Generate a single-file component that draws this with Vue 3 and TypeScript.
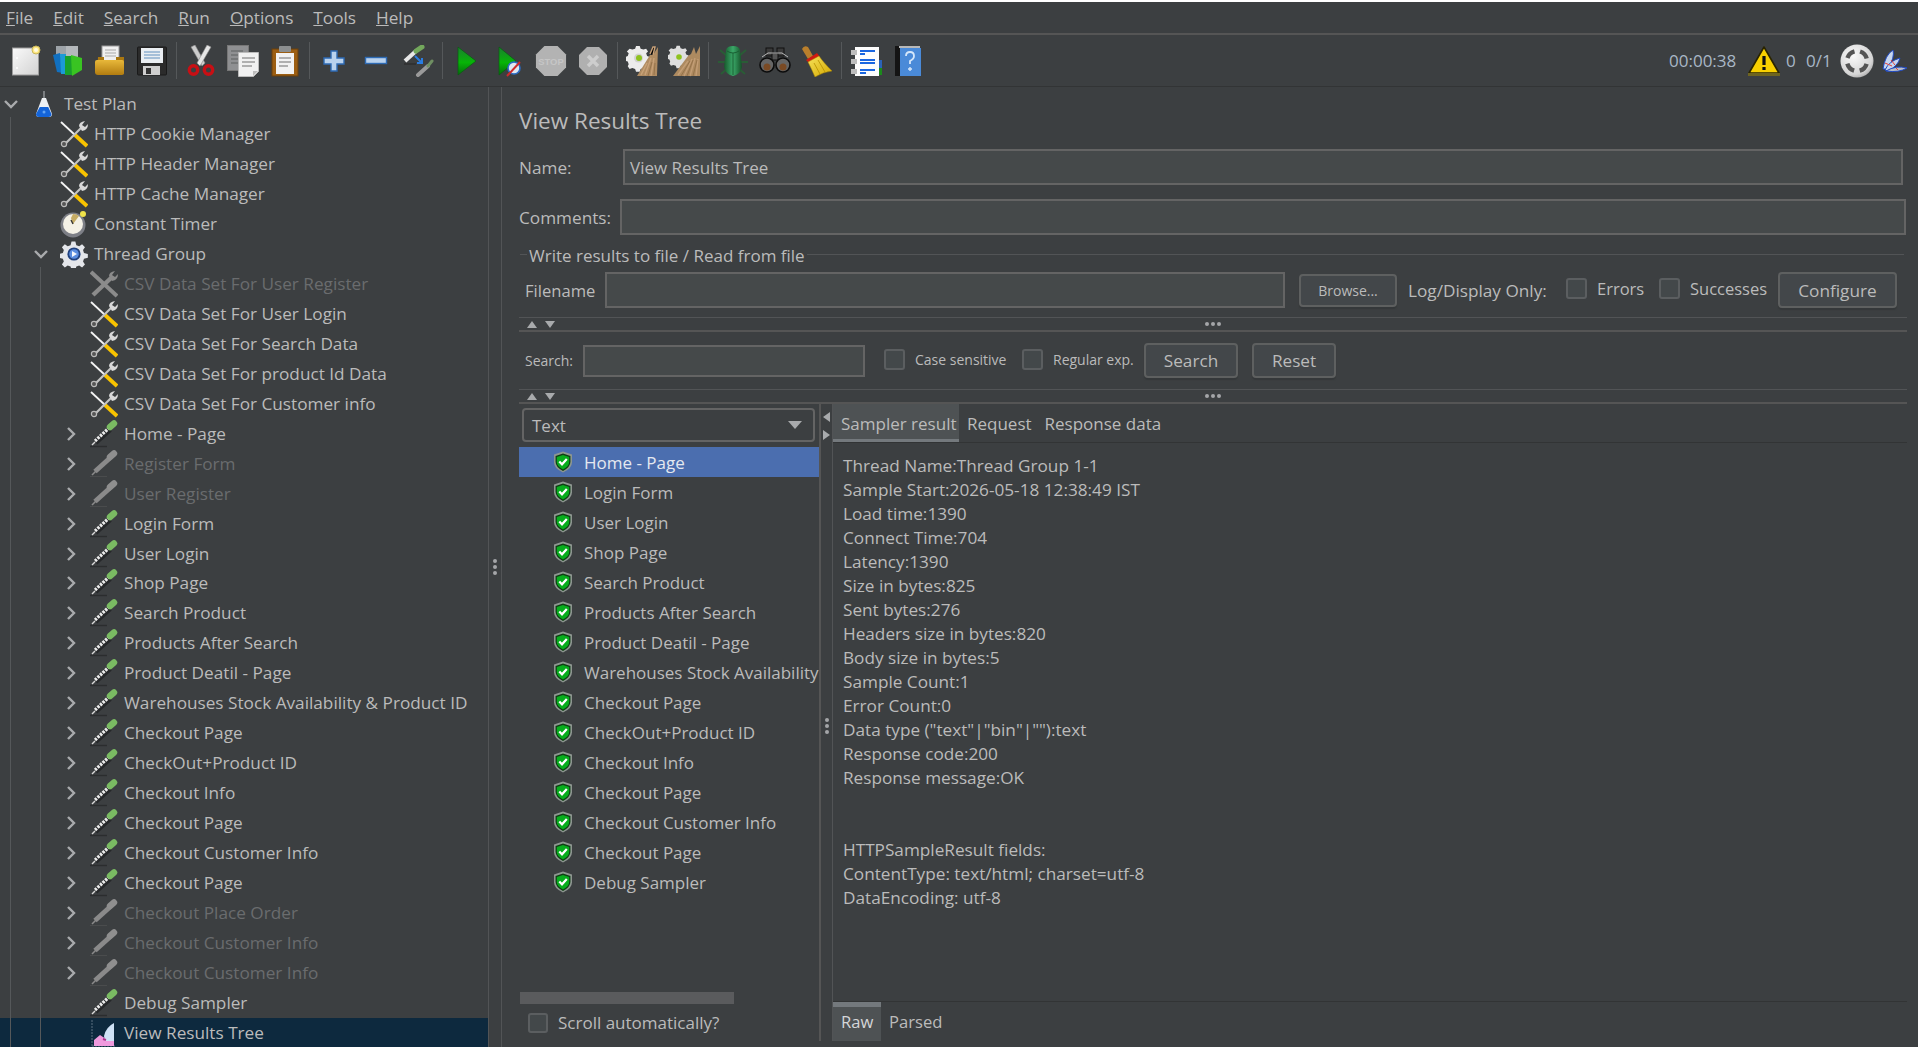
<template>
  <div class="app">
    <svg class="sprite" aria-hidden="true">
      <defs>
        <linearGradient id="pageFill" x1="0" y1="0" x2="1" y2="1"><stop offset="0" stop-color="#fafafa" /><stop offset="1" stop-color="#d2d2d2" /></linearGradient>
        <linearGradient id="folderFill" x1="0" y1="0" x2="0" y2="1"><stop offset="0" stop-color="#e8b83a" /><stop offset="1" stop-color="#b27c10" /></linearGradient>
        <linearGradient id="playFill" x1="0" y1="0" x2="0" y2="1"><stop offset="0" stop-color="#1b7f30" /><stop offset=".55" stop-color="#07b507" /><stop offset="1" stop-color="#056b0c" /></linearGradient>
        <linearGradient id="bugFill" x1="0" y1="0" x2="1" y2="0"><stop offset="0" stop-color="#17592c" /><stop offset=".5" stop-color="#3aa868" /><stop offset="1" stop-color="#155027" /></linearGradient>
        <linearGradient id="broomFill" x1="0" y1="0" x2="1" y2="1"><stop offset="0" stop-color="#f7e25a" /><stop offset="1" stop-color="#d4a800" /></linearGradient>
        <radialGradient id="greyDisc" cx=".4" cy=".35" r=".8"><stop offset="0" stop-color="#fafafa" /><stop offset=".7" stop-color="#d5d5d5" /><stop offset="1" stop-color="#8e8e8e" /></radialGradient>
      </defs>

      <symbol id="t-new" viewBox="0 0 32 32">
        <rect x="2.5" y="3" width="26" height="27" fill="url(#pageFill)" stroke="#9c9c9c" />
        <circle cx="7" cy="13" r="1" fill="#fff" /><circle cx="7" cy="23" r="1" fill="#fff" />
        <circle cx="26" cy="5" r="4" fill="#ffe882" stroke="#c9b65a" />
        <circle cx="26" cy="5" r="2" fill="#fffbe0" />
      </symbol>
      <symbol id="t-templates" viewBox="0 0 32 32">
        <rect x="4" y="1" width="10" height="11" fill="#9da3a8" /><rect x="14" y="1" width="12" height="11" fill="#b4b8bb" />
        <path d="M1 10l7-2 3 20-6-1z" fill="#1170c0" /><path d="M8 9h6v20H9z" fill="#1c9ad6" />
        <path d="M13 11h8v19h-8z" fill="#18a02c" /><path d="M19 10l11 3v12l-10 6z" fill="#39c422" />
      </symbol>
      <symbol id="t-open" viewBox="0 0 32 32">
        <rect x="8" y="1" width="17" height="15" fill="#f0f0f0" stroke="#9b9b9b" />
        <path d="M11 5h11M11 8h11M11 11h11" stroke="#a8a8a8" />
        <path d="M4 12h6v3h12v-3h8v17H3z" fill="#a97710" />
        <path d="M1 17q0-2 2-2h25q2 0 2 2v11q0 2-2 2H4q-3 0-3-3z" fill="url(#folderFill)" />
      </symbol>
      <symbol id="t-save" viewBox="0 0 32 32">
        <rect x="1.5" y="2" width="29" height="28" rx="1" fill="#2b2b2b" stroke="#1a1a1a" />
        <rect x="5" y="3" width="22" height="15" fill="#eaeef2" />
        <path d="M8 7h16M8 10h16M8 13h16" stroke="#8fb0cf" stroke-width="1.6" />
        <rect x="7" y="21" width="17" height="9" fill="#cfcfcf" />
        <rect x="10" y="23" width="5" height="6" fill="#333" />
      </symbol>
      <symbol id="t-cut" viewBox="0 0 32 32">
        <path d="M6 2l11 19 3-3L10 0z" fill="#cdcdcd" stroke="#8a8a8a" stroke-width=".6" />
        <path d="M26 2L15 21l-3-3L22 0z" fill="#e6e6e6" stroke="#8a8a8a" stroke-width=".6" />
        <circle cx="8.5" cy="25" r="4.2" fill="none" stroke="#c80f14" stroke-width="3.4" />
        <circle cx="23.5" cy="25" r="4.2" fill="none" stroke="#c80f14" stroke-width="3.4" />
      </symbol>
      <symbol id="t-copy" viewBox="0 0 32 32">
        <rect x="0.5" y="0.5" width="21" height="25" fill="#8f9092" stroke="#777" />
        <path d="M4 6h12M4 10h12M4 14h12M4 18h12" stroke="#6f7072" stroke-width="1.4" />
        <path d="M11.5 7.5h20v19l-5 5h-15z" fill="#f1f1f1" stroke="#bbb" />
        <path d="M15 13h13M15 17h13M15 21h10" stroke="#9a9a9a" stroke-width="1.4" />
        <path d="M26 31v-5h5z" fill="#bdbdbd" />
      </symbol>
      <symbol id="t-paste" viewBox="0 0 32 32">
        <rect x="3" y="4" width="26" height="27" fill="#9c5e12" stroke="#6b400c" />
        <rect x="7" y="8" width="18" height="21" fill="#f2f2f2" />
        <path d="M10 13h12M10 17h12M10 21h9" stroke="#9a9a9a" stroke-width="1.4" />
        <rect x="10" y="1" width="12" height="6" rx="1" fill="#8c8f90" />
      </symbol>
      <symbol id="t-add" viewBox="0 0 32 32">
        <path d="M13 6h6v7h7v6h-7v7h-6v-7H6v-6h7z" fill="#b9d2ee" stroke="#2e6bb5" stroke-width="1.4" />
      </symbol>
      <symbol id="t-remove" viewBox="0 0 32 32">
        <rect x="5.5" y="12.5" width="21" height="6" fill="#b9d2ee" stroke="#2e6bb5" stroke-width="1.4" />
      </symbol>
      <symbol id="t-toggle" viewBox="0 0 32 32">
        <path d="M3 16L14 6" stroke="#e8e8e8" stroke-width="4" />
        <path d="M14 6l6-4" stroke="#73a85c" stroke-width="5" stroke-linecap="round" />
        <path d="M2 19h12" stroke="#2b2b2b" stroke-width="1.2" />
        <path d="M13 11l7 7m0-5v5h-5" fill="none" stroke="#2a7de1" stroke-width="2" />
        <path d="M16 30l10-9" stroke="#9a9a9a" stroke-width="4" stroke-linecap="round" />
        <path d="M26 21l4-5" stroke="#6f8f62" stroke-width="3" stroke-linecap="round" />
      </symbol>
      <symbol id="t-start" viewBox="0 0 32 32">
        <path d="M7 2l18 14L7 30z" fill="url(#playFill)" stroke="#0a5a12" stroke-width=".7" />
      </symbol>
      <symbol id="t-startn" viewBox="0 0 32 32">
        <path d="M6 2l17 14L6 30z" fill="url(#playFill)" stroke="#0a5a12" stroke-width=".7" />
        <circle cx="21" cy="23" r="6" fill="#dfe7f2" stroke="#2c6cc5" stroke-width="1.6" />
        <path d="M14 31L27 17" stroke="#cf2a2a" stroke-width="2" />
      </symbol>
      <symbol id="t-stop" viewBox="0 0 34 34">
        <path d="M10 1h14l9 9v14l-9 9H10l-9-9V10z" fill="#b3b3b3" />
        <text x="17" y="21" font-family="Liberation Sans, sans-serif" font-weight="700" font-size="10" text-anchor="middle" fill="#c6c6c6">STOP</text>
      </symbol>
      <symbol id="t-shut" viewBox="0 0 32 32">
        <path d="M10 2h12l8 8v12l-8 8H10l-8-8V10z" fill="#b0b0b0" />
        <path d="M11 11l10 10M21 11L11 21" stroke="#cdcdcd" stroke-width="3.4" />
      </symbol>
      <symbol id="t-clear" viewBox="0 0 32 32">
        <path d="M12 1h4l1 3 3 1 3-1 2 3-2 2 1 3 3 1v4l-3 1-1 3 2 2-3 3-2-1-3 1-1 3h-4l-1-3-3-1-3 1-2-3 1-2-1-3-3-1v-4l3-1 1-3-2-2 3-3 3 1 3-1z" fill="#ececec" transform="translate(-1 0) scale(.92)" />
        <circle cx="12.5" cy="13" r="4.5" fill="#d2d2d2" />
        <circle cx="13" cy="13" r="3" fill="#8ec21e" />
        <path d="M11 31L24 10l3 0 5-8-1 29z" fill="#b08c62" />
        <path d="M24 9l3-7 2 0-2 8M19 30l6-17M25 31l3-18M15 30l6-12" stroke="#c8a178" stroke-width="1.4" />
        <path d="M22 31l4-14M28 30l1-12" stroke="#8f6c45" stroke-width=".8" />
      </symbol>
      <symbol id="t-clearall" viewBox="0 0 32 32">
        <path d="M12 1h4l1 3 3 1 3-1 2 3-2 2 1 3 3 1v4l-3 1-1 3 2 2-3 3-2-1-3 1-1 3h-4l-1-3-3-1-3 1-2-3 1-2-1-3-3-1v-4l3-1 1-3-2-2 3-3 3 1 3-1z" fill="#dedede" transform="translate(-1 0) scale(.8)" />
        <circle cx="11" cy="12" r="2.8" fill="#8ec21e" />
        <path d="M5 31L20 11l3-2 3-7 2 7 4-8v30z" fill="#ad8a60" />
        <path d="M10 30l10-14M16 31l8-17M22 31l5-18M28 31l2-17" stroke="#c39d75" stroke-width="1.4" />
        <path d="M13 31l9-15M19 31l6-16M25 31l4-16" stroke="#8f6c45" stroke-width=".8" />
      </symbol>
      <symbol id="t-function" viewBox="0 0 32 32">
        <path d="M3 5l7 6M29 5l-7 6M1 17h9M31 17h-9M4 29l7-6M28 29l-7-6" stroke="#2a5c36" stroke-width="2" />
        <path d="M16 1q6 0 7 4l2 17q-2 8-9 9-7-1-9-9L9 5q1-4 7-4z" fill="url(#bugFill)" />
        <path d="M16 8v22M10 6q6 4 12 0" fill="none" stroke="#1a5f33" stroke-width="1" />
      </symbol>
      <symbol id="t-search" viewBox="0 0 32 32">
        <rect x="7" y="3" width="7" height="8" fill="#3a3a3a" stroke="#111" /><rect x="18" y="3" width="7" height="8" fill="#3a3a3a" stroke="#111" />
        <rect x="13" y="8" width="6" height="7" fill="#555" stroke="#111" />
        <circle cx="8" cy="20" r="7" fill="#666" stroke="#0c0c0c" stroke-width="1.6" />
        <circle cx="24" cy="20" r="7" fill="#666" stroke="#0c0c0c" stroke-width="1.6" />
        <circle cx="8" cy="22" r="3.5" fill="#7a4a24" /><circle cx="24" cy="22" r="3.5" fill="#7a4a24" />
        <path d="M3 12l6-4h14l6 4" fill="none" stroke="#b9b9b9" stroke-width="1" />
      </symbol>
      <symbol id="t-broom" viewBox="0 0 32 32">
        <path d="M1 4q2-4 6-2l5 9-5 3z" fill="#b97f2c" />
        <path d="M5 15l11-7 3 4-11 6z" fill="#cf1a12" />
        <path d="M7 17l11-6q4 6 13 15-9 1-17 6-3-7-7-15z" fill="url(#broomFill)" stroke="#a98600" stroke-width=".5" />
        <path d="M13 18l6 11M17 15l7 12" stroke="#b58e00" stroke-width=".8" />
      </symbol>
      <symbol id="t-log" viewBox="0 0 32 32">
        <rect x="26" y="15" width="6" height="8" fill="#2b63b8" /><rect x="26" y="23" width="6" height="7" fill="#1c8a1c" />
        <rect x="5" y="2" width="24" height="29" fill="#fdfdfd" />
        <rect x="1" y="5" width="6" height="5" fill="#bdbdbd" /><rect x="1" y="14" width="6" height="5" fill="#bdbdbd" /><rect x="1" y="24" width="6" height="5" fill="#bdbdbd" />
        <path d="M10 6h15M10 9h5M10 15h15M10 18h15M10 25h15M10 28h6" stroke="#1a66e0" stroke-width="1.8" />
      </symbol>
      <symbol id="t-help" viewBox="0 0 28 32">
        <rect x="1" y="1" width="6" height="30" fill="#141414" />
        <rect x="5" y="1" width="21" height="2" fill="#b8b8b8" />
        <rect x="6" y="3" width="21" height="28" fill="#4a8ad8" />
        <path d="M12 11q0-4 4-4t4 4q0 3-4 5v3" fill="none" stroke="#d4e6fa" stroke-width="1.8" />
        <path d="M16 22v4M14 24h4" stroke="#d4e6fa" stroke-width="1.4" />
      </symbol>

      <symbol id="s-warn" viewBox="0 0 34 32">
        <path d="M17 2L32 28H2z" fill="#f8d000" stroke="#2a2400" stroke-width="1.6" stroke-linejoin="round" />
        <rect x="1" y="28" width="32" height="3" fill="#6e6420" />
        <rect x="15.4" y="11" width="3.2" height="9" fill="#111" /><rect x="15.4" y="22" width="3.2" height="3" fill="#111" />
      </symbol>
      <symbol id="s-disc" viewBox="0 0 34 34">
        <circle cx="17" cy="17" r="16.5" fill="url(#greyDisc)" />
        <circle cx="17" cy="17" r="10" fill="none" stroke="#555" stroke-width="4.4" stroke-dasharray="10 5.7" stroke-dashoffset="-2.85" />
      </symbol>
      <symbol id="s-feather" viewBox="0 0 26 24">
        <path d="M1 20Q3 6 11 1q2 7-5 19z" fill="#c7d6ef" stroke="#1f49c2" />
        <path d="M3 21Q7 12 18 9q-2 8-12 13z" fill="#c7d6ef" stroke="#1f49c2" />
        <path d="M4 22q10-6 21-3-8 5-21 3z" fill="#b7bdc9" stroke="#1f49c2" />
        <path d="M3 14l7 3M9 11l4 5M14 19l2 2" stroke="#e0433d" />
      </symbol>

      <symbol id="n-flask" viewBox="0 0 18 28">
        <path d="M9 1v8" stroke="#8b8f92" stroke-width="1.6" />
        <path d="M7 8h4l6 16q0 3-3 3H4q-3 0-3-3z" fill="#eef1f4" />
        <path d="M4.8 17h8.4l3.3 7q0 3-3 3H4q-3 0-3-3z" fill="#1464d8" />
        <circle cx="9" cy="22" r="1.5" fill="#62a4f2" />
      </symbol>
      <symbol id="n-wrench" viewBox="0 0 28 28">
        <path d="M1 2l14 13" stroke="#f4f4f4" stroke-width="1.8" />
        <path d="M15 15l12 11" stroke="#f8c300" stroke-width="3.8" />
        <path d="M21 8L5 24" stroke="#c4c4c4" stroke-width="2.2" />
        <circle cx="4" cy="24" r="2.6" fill="#555" stroke="#bbb" stroke-width="1.2" />
        <path d="M19 6q0-4 6-5l-3 4 3 2 3-3q0 6-6 7z" fill="#d9d9d9" />
      </symbol>
      <symbol id="n-wrench-off" viewBox="0 0 28 28">
        <path d="M1 2l26 24" stroke="#8b8b8b" stroke-width="4" />
        <path d="M21 8L3 25" stroke="#8b8b8b" stroke-width="4.4" />
        <path d="M19 6q0-4 6-5l-3 4 3 2 3-3q0 6-6 7z" fill="#8b8b8b" />
      </symbol>
      <symbol id="n-timer" viewBox="0 0 28 28">
        <circle cx="13" cy="15" r="12.5" fill="#7d7f86" />
        <circle cx="13" cy="14" r="10" fill="#f4f1e6" />
        <path d="M13 4a10 10 0 0 1 6 2l-6 8-2-6z" fill="#c5ab63" />
        <path d="M13 14l-2-4" stroke="#333" stroke-width="1.4" />
        <circle cx="23" cy="4" r="3" fill="#efe24a" />
      </symbol>
      <symbol id="n-gear" viewBox="0 0 28 28">
        <path d="M12 1h4l1 4 3 1 3-2 3 3-2 3 1 3 4 1v4l-4 1-1 3 2 3-3 3-3-2-3 1-1 4h-4l-1-4-3-1-3 2-3-3 2-3-1-3-4-1v-4l4-1 1-3-2-3 3-3 3 2 3-1z" fill="#e4e6ea" transform="translate(0 .5) scale(.96)" />
        <circle cx="14" cy="14" r="6.6" fill="#20417e" />
        <circle cx="14" cy="14" r="4.8" fill="#5a8de0" />
        <path d="M12 11l5 3-5 3z" fill="#f4f7fd" />
      </symbol>
      <symbol id="n-dropper" viewBox="0 0 28 28">
        <path d="M0 26.5h17" stroke="#2b2d2e" stroke-width="1.4" />
        <path d="M2 25l4-4" stroke="#d8d8d8" stroke-width="1.4" />
        <path d="M5.500 22.500L20 9.500" stroke="#26282a" stroke-width="5.200" />
        <path d="M5 21L19 8" stroke="#ececec" stroke-width="3.200" stroke-dasharray="2.500 1" />
        <path d="M20 7l4-3.500" stroke="#7abb62" stroke-width="6.400" stroke-linecap="round" />
      </symbol>
      <symbol id="n-dropper-off" viewBox="0 0 28 28">
        <path d="M0 26.5h17" stroke="#4a4c4d" stroke-width="1" />
        <path d="M2 25l4-4" stroke="#8a8a8a" stroke-width="1.6" />
        <path d="M5 21.5L20 8" stroke="#8a8a8a" stroke-width="5" />
        <path d="M20 7l4-3.5" stroke="#8f8f8f" stroke-width="6.4" stroke-linecap="round" />
      </symbol>
      <symbol id="n-results" viewBox="0 0 28 28">
        <path d="M2 1v26M2 27h24" stroke="#5c7080" stroke-width="1" stroke-dasharray="2 1" />
        <path d="M4 27v-6l6-5 6 4 8 0v7z" fill="#f09ade" />
        <path d="M14 17q2-9 10-13v18h-9z" fill="#cfe2f6" />
        <path d="M13 20l3 1" stroke="#b03090" stroke-width="2" />
      </symbol>
      <symbol id="n-ok" viewBox="0 0 20 22">
        <path d="M10 .5l9 3v8q0 6-9 10-9-4-9-10v-8z" fill="#8d9690" />
        <path d="M10 2.5l7.4 2.5V11q0 5-7.4 9-7.4-4-7.4-9V5z" fill="#0f3d14" />
        <path d="M10 4l6.2 2V11q0 4-6.2 7.6Q3.8 15 3.8 11V6z" fill="#07ad1d" />
        <path d="M6.3 10.5l2.7 2.8 4.8-5.3" fill="none" stroke="#fff" stroke-width="2.2" />
      </symbol>
    </svg>

    <div class="menubar">
      <span v-for="m in menus" :key="m.rest" class="menu"><u>{{ m.key }}</u>{{ m.rest }}</span>
    </div>

    <div class="toolbar">
      <template v-for="(t, i) in tools" :key="i">
        <span v-if="t === '|'" class="tsep"><i></i></span>
        <span v-else class="tbtn"><svg class="ticon"><use :href="'#t-' + t" /></svg></span>
      </template>
      <div class="status">
        <span class="clock">00:00:38</span>
        <svg class="s-warn"><use href="#s-warn" /></svg>
        <span class="count">0</span>
        <span class="threads">0/1</span>
        <svg class="s-disc"><use href="#s-disc" /></svg>
        <svg class="s-feather"><use href="#s-feather" /></svg>
      </div>
    </div>

    <div class="body">
      <div class="tree">
        <i class="guide g0"></i>
        <i class="guide g1"></i>
        <div
          v-for="(n, i) in nodes"
          :key="i"
          class="node"
          :class="{ off: n.off, cur: n.cur }"
          :style="{ paddingLeft: n.d * 30 + 'px' }"
        >
          <span class="chev">
            <svg v-if="n.x" viewBox="0 0 14 14" class="chev-i" :class="n.x"><path d="M4 1l6 6-6 6" fill="none" stroke="#a9abad" stroke-width="2.4" /></svg>
          </span>
          <svg class="nicon"><use :href="'#n-' + n.i" /></svg>
          <span class="ntext">{{ n.t }}</span>
        </div>
      </div>

      <div class="vsplit"><span class="dots col"><b></b><b></b><b></b></span></div>

      <div class="panel">
        <div class="title">View Results Tree</div>
        <div class="frow name-row">
          <label class="name-lbl">Name:</label>
          <div class="field name-f">View Results Tree</div>
        </div>
        <div class="frow comm-row">
          <label class="comm-lbl">Comments:</label>
          <div class="field comm-f"></div>
        </div>
        <div class="legend">
          <i class="lg-a"></i><span>Write results to file / Read from file</span><i class="lg-b"></i>
        </div>
        <div class="frow file-row">
          <label class="file-lbl">Filename</label>
          <div class="field file-f"></div>
          <button class="btn browse">Browse...</button>
          <span class="log-lbl">Log/Display Only:</span>
          <i class="check"></i><span class="opt err">Errors</span>
          <i class="check"></i><span class="opt suc">Successes</span>
          <button class="btn conf">Configure</button>
        </div>
        <div class="hsplit">
          <i class="tri up"></i><i class="tri dn"></i>
          <span class="dots"><b></b><b></b><b></b></span>
        </div>
        <div class="frow search-row">
          <label class="srch-lbl">Search:</label>
          <div class="field srch-f"></div>
          <i class="check c1"></i><span class="small cs">Case sensitive</span>
          <i class="check"></i><span class="small re">Regular exp.</span>
          <button class="btn srch">Search</button>
          <button class="btn rst">Reset</button>
        </div>
        <div class="hsplit two">
          <i class="tri up"></i><i class="tri dn"></i>
          <span class="dots"><b></b><b></b><b></b></span>
        </div>

        <div class="results">
          <div class="rleft">
            <div class="combo"><span>Text</span><i class="tri dn big"></i></div>
            <div class="rlist">
              <div v-for="(r, i) in results" :key="i" class="ritem" :class="{ sel: i === 0 }">
                <svg class="shield"><use href="#n-ok" /></svg>
                <span>{{ r }}</span>
              </div>
            </div>
            <div class="hbar"></div>
            <div class="scrollchk"><i class="check big"></i><span>Scroll automatically?</span></div>
          </div>
          <div class="rsplit">
            <i class="tri lt"></i><i class="tri rt"></i>
            <span class="dots col"><b></b><b></b><b></b></span>
          </div>
          <div class="rright">
            <div class="tabs">
              <span class="tab on">Sampler result</span>
              <span class="tab">Request</span>
              <span class="tab">Response data</span>
            </div>
            <div class="detail">
              <div v-for="(l, i) in lines" :key="i" class="dline">{{ l }}</div>
            </div>
            <div class="btabs">
              <span class="btab on">Raw</span>
              <span class="btab">Parsed</span>
            </div>
          </div>
        </div>
      </div>
    </div>
  </div>
</template>

<script setup lang="ts">
type Node = { t: string; d: number; i: string; x?: string; off?: boolean; cur?: boolean }

const menus = [
  { key: 'F', rest: 'ile' },
  { key: 'E', rest: 'dit' },
  { key: 'S', rest: 'earch' },
  { key: 'R', rest: 'un' },
  { key: 'O', rest: 'ptions' },
  { key: 'T', rest: 'ools' },
  { key: 'H', rest: 'elp' },
]

const tools = [
  'new', 'templates', 'open', 'save', '|',
  'cut', 'copy', 'paste', '|',
  'add', 'remove', 'toggle', '|',
  'start', 'startn', 'stop', 'shut', '|',
  'clear', 'clearall', '|',
  'function', 'search', 'broom', '|',
  'log', 'help',
]

function sampler(t: string, off = false): Node {
  return { t, d: 2, i: off ? 'dropper-off' : 'dropper', x: 'closed', off }
}

const nodes: Node[] = [
  { t: 'Test Plan', d: 0, i: 'flask', x: 'open' },
  { t: 'HTTP Cookie Manager', d: 1, i: 'wrench' },
  { t: 'HTTP Header Manager', d: 1, i: 'wrench' },
  { t: 'HTTP Cache Manager', d: 1, i: 'wrench' },
  { t: 'Constant Timer', d: 1, i: 'timer' },
  { t: 'Thread Group', d: 1, i: 'gear', x: 'open' },
  { t: 'CSV Data Set For User Register', d: 2, i: 'wrench-off', off: true },
  { t: 'CSV Data Set For User Login', d: 2, i: 'wrench' },
  { t: 'CSV Data Set For Search Data', d: 2, i: 'wrench' },
  { t: 'CSV Data Set For product Id Data', d: 2, i: 'wrench' },
  { t: 'CSV Data Set For Customer info', d: 2, i: 'wrench' },
  sampler('Home - Page'),
  sampler('Register Form', true),
  sampler('User Register', true),
  sampler('Login Form'),
  sampler('User Login'),
  sampler('Shop Page'),
  sampler('Search Product'),
  sampler('Products After Search'),
  sampler('Product Deatil - Page'),
  sampler('Warehouses Stock Availability & Product ID'),
  sampler('Checkout Page'),
  sampler('CheckOut+Product ID'),
  sampler('Checkout Info'),
  sampler('Checkout Page'),
  sampler('Checkout Customer Info'),
  sampler('Checkout Page'),
  sampler('Checkout Place Order', true),
  sampler('Checkout Customer Info', true),
  sampler('Checkout Customer Info', true),
  { t: 'Debug Sampler', d: 2, i: 'dropper' },
  { t: 'View Results Tree', d: 2, i: 'results', cur: true },
]

const results = [
  'Home - Page', 'Login Form', 'User Login', 'Shop Page', 'Search Product',
  'Products After Search', 'Product Deatil - Page', 'Warehouses Stock Availability & Product ID',
  'Checkout Page', 'CheckOut+Product ID', 'Checkout Info', 'Checkout Page',
  'Checkout Customer Info', 'Checkout Page', 'Debug Sampler',
]

const lines = [
  'Thread Name:Thread Group 1-1',
  'Sample Start:2026-05-18 12:38:49 IST',
  'Load time:1390',
  'Connect Time:704',
  'Latency:1390',
  'Size in bytes:825',
  'Sent bytes:276',
  'Headers size in bytes:820',
  'Body size in bytes:5',
  'Sample Count:1',
  'Error Count:0',
  'Data type ("text"|"bin"|""):text',
  'Response code:200',
  'Response message:OK',
  '\u00a0',
  '\u00a0',
  'HTTPSampleResult fields:',
  'ContentType: text/html; charset=utf-8',
  'DataEncoding: utf-8',
]
</script>

<style>
html, body { margin: 0; background: #3c3f41; }
</style>

<style scoped>
.app {
  width: 1918px; height: 1047px; overflow: hidden; box-sizing: border-box;
  border-top: 2px solid #ffffff; background: #3c3f41; color: #bbbbbb;
  display: flex; flex-direction: column;
  font-family: "Open Sans", "Liberation Sans", sans-serif; font-size: 17.2px;
}
.sprite { position: absolute; width: 0; height: 0; }

.menubar { height: 31px; display: flex; align-items: center; padding-left: 6px; gap: 20px; border-bottom: 2px solid #555555; flex: none; }

.toolbar { height: 51px; flex: none; display: flex; align-items: center; padding-left: 5px; border-bottom: 1px solid #323435; }
.tbtn { width: 42px; display: flex; justify-content: center; }
.ticon { width: 32px; height: 32px; display: block; }
.tsep { width: 7px; display: flex; justify-content: center; }
.tsep i { width: 1px; height: 37px; background: #55585a; }
.status { margin-left: auto; display: flex; align-items: center; padding-right: 10px; font-size: 17px; color: #a9b7c6; }
.clock { width: 78px; white-space: nowrap; }
.s-warn { width: 34px; height: 32px; margin-right: 5px; }
.count { width: 20px; }
.threads { width: 34px; }
.s-disc { width: 34px; height: 34px; margin-right: 8px; }
.s-feather { width: 26px; height: 24px; }

.body { flex: 1; display: flex; min-height: 0; }
.tree { width: 488px; flex: none; padding-top: 2px; position: relative; overflow: hidden; }
.guide { position: absolute; width: 1px; background: #55585a; bottom: 0; z-index: 1; }
.g0 { left: 10px; top: 30px; }
.g1 { left: 40px; top: 180px; }
.node { height: 29.97px; display: flex; align-items: center; }
.node.off { color: #6a6c6e; }
.node.cur { background: #0d293e; }
.chev { width: 22px; margin-right: 8px; display: flex; justify-content: center; flex: none; }
.chev-i { width: 14px; height: 14px; }
.chev-i.open { transform: rotate(90deg); }
.nicon { width: 28px; height: 28px; margin-right: 6px; flex: none; }
.ntext { white-space: nowrap; margin-top: -1px; }

.vsplit { width: 14px; flex: none; box-sizing: border-box; border-left: 1px solid #525456; border-right: 1px solid #525456; display: flex; align-items: center; justify-content: center; }
.dots { display: inline-flex; gap: 2px; }
.dots.col { flex-direction: column; }
.dots b { width: 4px; height: 4px; border-radius: 50%; background: #a4a6a8; display: block; }

.panel { flex: 1; min-width: 0; padding-left: 17px; padding-right: 11px; display: flex; flex-direction: column; }
.title { margin-top: 19px; height: 30px; line-height: 30px; font-size: 22.5px; }
.frow { display: flex; align-items: center; flex: none; }
.field { height: 100%; box-sizing: border-box; background: #45494a; border: 2px solid #646464; display: flex; align-items: center; padding-left: 5px; }
.name-row { height: 36px; margin-top: 13px; padding-right: 4px; }
.name-lbl { width: 104px; margin-top: 1px; }
.name-f { flex: 1; padding-top: 1px; font-size: 17px; }
.comm-row { height: 36px; margin-top: 14px; padding-right: 1px; }
.comm-lbl { width: 101px; }
.comm-f { flex: 1; }
.legend { height: 20px; margin-top: 11px; display: flex; align-items: center; gap: 1px; margin-right: 3px; }
.legend span { padding: 0 1px; margin-top: -2px; font-size: 17px; }
.lg-a, .lg-b { height: 1px; background: #525456; margin-top: -4px; }
.lg-a { width: 7px; margin-left: 1px; }
.lg-b { flex: 1; }

.file-row { height: 36px; margin-top: 6px; padding-left: 6px; }
.file-lbl { width: 80px; font-size: 16.6px; }
.file-f { width: 680px; }
.btn {
  font: inherit; color: #bbbbbb; box-sizing: border-box; border: 2px solid #5e6060; border-radius: 4px;
  background: #43474a; box-shadow: 0 2px 1px #35383a; padding: 0; height: 33px; flex: none;
}
.browse { width: 98px; margin-left: 14px; font-size: 14px; }
.log-lbl { width: 158px; margin-left: 11px; white-space: nowrap; }
.check { width: 21px; height: 21px; box-sizing: border-box; border: 2px solid #5b5e60; border-radius: 3px; background: #43484a; flex: none; margin-top: -4px; }
.opt { margin-left: 10px; margin-top: -4px; font-size: 16.5px; }
.err { width: 62px; }
.suc { width: 88px; }
.conf { width: 119px; height: 36px; margin-top: 0; }

.hsplit { height: 15px; flex: none; margin-top: 9px; box-sizing: border-box; border-top: 1px solid #525456; border-bottom: 2px solid #555555; display: flex; align-items: center; padding-left: 8px; position: relative; }
.tri { display: block; width: 0; height: 0; border-style: solid; border-color: transparent; flex: none; }
.tri.up { border-width: 0 5px 7px; border-bottom-color: #a8aaac; }
.tri.dn { border-width: 7px 5px 0; border-top-color: #a8aaac; margin-left: 8px; }
.hsplit .dots { margin-left: 650px; }

.search-row { height: 35px; margin-top: 11px; padding-left: 6px; }
.srch-lbl { width: 58px; font-size: 14px; }
.srch-f { width: 282px; height: 32px; }
.c1 { margin-left: 19px; }
.search-row .check { margin-top: -3px; }
.small { font-size: 14px; margin-left: 10px; margin-top: -3px; white-space: nowrap; }
.cs { width: 107px; }
.re { width: 81px; }
.srch { width: 94px; margin-left: 10px; height: 35px; }
.rst { width: 84px; margin-left: 14px; height: 35px; }
.hsplit.two { margin-top: 11px; }

.results { flex: 1; min-height: 0; display: flex; margin-bottom: 6px; }
.rleft { width: 300px; flex: none; display: flex; flex-direction: column; min-height: 0; font-size: 17px; }
.combo { height: 34px; margin: 4px 4px 5px 3px; box-sizing: border-box; border: 2px solid #646464; border-radius: 4px; display: flex; align-items: center; justify-content: space-between; padding: 0 11px 0 8px; flex: none; }
.tri.big { border-width: 8px 7px 0; border-top-color: #a8aaac; margin: 0; }
.rlist { flex: 1; min-height: 0; overflow: hidden; }
.ritem { height: 30px; display: flex; align-items: center; padding-left: 34px; white-space: nowrap; overflow: hidden; }
.ritem.sel { background: #4b6eaf; color: #e4e8f0; }
.shield { width: 20px; height: 22px; margin-right: 11px; flex: none; }
.hbar { height: 12px; width: 214px; margin-left: 1px; background: #5a5b5d; flex: none; }
.scrollchk { height: 37px; flex: none; display: flex; align-items: center; padding-left: 9px; }
.check.big { width: 20px; height: 20px; margin: 0 10px 0 0; }

.rsplit { width: 14px; flex: none; box-sizing: border-box; border-left: 2px solid #555555; border-right: 1px solid #525456; display: flex; flex-direction: column; align-items: center; position: relative; }
.tri.lt { border-width: 5px 7px 5px 0; border-right-color: #a8aaac; margin-top: 8px; }
.tri.rt { border-width: 5px 0 5px 7px; border-left-color: #a8aaac; margin-top: 8px; }
.rsplit .dots { margin-top: 278px; }

.rright { flex: 1; min-width: 0; display: flex; flex-direction: column; }
.tabs { height: 39px; flex: none; box-sizing: border-box; border-bottom: 1px solid #323435; display: flex; font-size: 17px; }
.tab { padding: 1px 5px 0 8px; display: flex; align-items: center; white-space: nowrap; }
.tab.on { background: #4e5254; border-bottom: 3px solid #74797d; width: 126px; box-sizing: border-box; padding-top: 4px; }
.detail { flex: 1; min-height: 0; padding: 11px 0 0 10px; }
.dline { height: 24px; line-height: 24px; white-space: nowrap; }
.btabs { height: 40px; flex: none; box-sizing: border-box; border-top: 1px solid #323435; display: flex; font-size: 16.6px; }
.btab { padding: 0 8px; display: flex; align-items: center; }
.btab.on { background: #4e5254; border-top: 5px solid #74797d; width: 48px; box-sizing: border-box; color: #d4d6d8; padding-bottom: 5px; }
</style>
